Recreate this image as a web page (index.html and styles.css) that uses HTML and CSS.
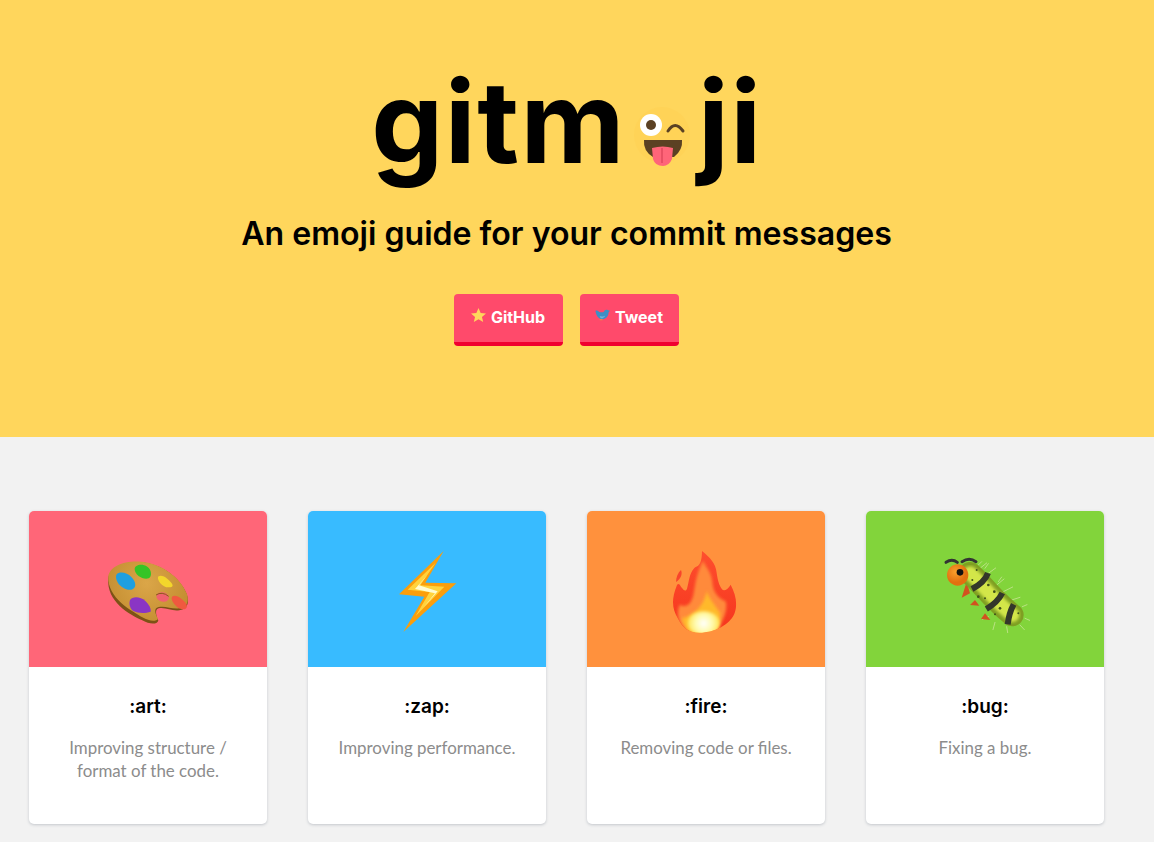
FILE: index.html
```html
<!DOCTYPE html>
<html>
  <head>
    <meta charset="UTF-8">
    <title>gitmoji</title>
    <link rel="stylesheet" href="styles.css">
  </head>
  <body>
    <header class="hero">
      <h1 class="logo">
        <span>gitm</span>
        <svg class="logo-face" viewBox="0 0 65 75">
          <circle cx="32" cy="35" r="28" fill="#ffd357"/>
          <circle cx="21" cy="25" r="11" fill="#fff"/>
          <circle cx="21" cy="25" r="5" fill="#5b4123"/>
          <path d="M38 31q7-11 15 0" fill="none" stroke="#5b4123" stroke-width="3" stroke-linecap="round"/>
          <path d="M14 40h38q1 10-8 17H23q-10-6-9-17z" fill="#5b4123"/>
          <path d="M22 48q11-3 21 0l-1 11q-3 7-9 7-8 0-10-7z" fill="#ff6579"/>
          <path d="M32 48v15" stroke="#e0485e" stroke-width="1.500"/>
        </svg>
        <span>ji</span>
      </h1>
      <h2 class="tagline">An emoji guide for your commit messages</h2>
      <div class="hero-buttons">
        <a class="btn btn-github" href="#">
          <svg class="btn-icon" viewBox="0 0 16 16"><path d="M8 0l2.300 5.200 5.700.6-4.300 3.700 1.300 5.500L8 12.100 3 15l1.300-5.500L0 5.800l5.700-.6z" fill="#ffd65c"/></svg>
          GitHub
        </a>
        <a class="btn btn-tweet" href="#">
          <svg class="btn-icon" viewBox="0 0 16 16">
            <path d="M.5 3c1.500-.7 3 .1 3.800 1.200 2 .6 4 .5 5.200-.2C10 2 12 1.200 14 2.300l2 .7-1.500 1.400C14.500 9 11 12 7.500 12 4 12 1 8 .5 3z" fill="#3c8fc5"/>
            <path d="M5 8.500c2 .8 4.500.6 6-.5-1 2-2.500 3-4 3-1 0-1.500-1-2-2.500z" fill="#6fb4dc"/>
            <path d="M5 12.500h3" stroke="#e79a3a"/>
          </svg>
          Tweet
        </a>
      </div>
    </header>

    <main class="cards">
      <article class="card">
        <div class="card-emoji card-art">
          <svg class="emoji-art" viewBox="0 0 330 300">
            <defs>
              <radialGradient id="wood" gradientUnits="userSpaceOnUse" cx="170" cy="130" r="150">
                <stop offset="0" stop-color="#dba648"/>
                <stop offset="1" stop-color="#c08a2e"/>
              </radialGradient>
            </defs>
            <path d="M55 115C58 85 105 62 155 67c60 6 115 45 135 95 8 22 6 44-22 49-22 4-40-10-62-6-14 4-6 25-1 37-5 12-25 12-50-2C120 225 48 185 55 115z" fill="#7d5216"/>
            <path d="M55 108C60 78 105 60 155 65c60 6 115 45 136 97 6 22 2 40-23 43-22 3-40-8-62-4-18 4-8 24-2 35-6 10-26 8-47-4C130 215 50 175 55 108z" fill="url(#wood)"/>
            <ellipse cx="218" cy="171" rx="19" ry="14" transform="rotate(12 218 171)" fill="#f0626e"/>
            <path d="M198 165q18-12 38 4" fill="none" stroke="#8a5a1a" stroke-width="3"/>
            <path d="M134 88c0-14 22-18 38-8 13 8 15 30 4 35-15 6-42-9-42-27z" fill="#36c426"/>
            <path d="M80 103c8-10 32-6 44 8 16 16 16 34 0 38-15 3-34-10-40-20-6-9-8-20-4-26z" fill="#1f9fe0"/>
            <path d="M204 110c12-8 26 4 37 15 11 11 8 17-4 17-18 2-36-21-33-32z" fill="#f3d62b"/>
            <path d="M246 170c10-8 26 2 38 15 13 14 6 26-10 22-15-3-34-27-28-37z" fill="#f0593f"/>
            <path d="M120 180c8-12 32-10 46 3 10 10 18 22 16 32-17 6-38 5-52-2-11-8-14-22-10-33z" fill="#8a35c4"/>
          </svg>
        </div>
        <div class="card-info">
          <h3 class="card-code">:art:</h3>
          <p class="card-desc">Improving structure / format of the code.</p>
        </div>
      </article>

      <article class="card">
        <div class="card-emoji card-zap">
          <svg class="emoji-zap" viewBox="0 0 255 300">
            <path d="M176 33L121 128l93 2L55 276l63-106-76-7z" fill="#fb9e0b"/>
            <path d="M152 68L106 136l72 4L92 228l42-72-66-7z" fill="#ffd33d"/>
            <path d="M128 104L90 147l60 13-34 42 42-48-56-18z" fill="#fffbd0"/>
          </svg>
        </div>
        <div class="card-info">
          <h3 class="card-code">:zap:</h3>
          <p class="card-desc">Improving performance.</p>
        </div>
      </article>

      <article class="card">
        <div class="card-emoji card-fire">
          <svg class="emoji-fire" viewBox="0 0 285 300">
            <defs>
              <radialGradient id="flameCore" gradientUnits="userSpaceOnUse" cx="140" cy="250" r="50">
                <stop offset="0" stop-color="#fff"/>
                <stop offset=".5" stop-color="#fffbb0"/>
                <stop offset="1" stop-color="#ffe04a"/>
              </radialGradient>
              <linearGradient id="flameEdge" x1="0" y1="0" x2="0" y2="1">
                <stop offset="0" stop-color="#ff5230"/>
                <stop offset="1" stop-color="#f5321c"/>
              </linearGradient>
              <filter id="soft" x="-20%" y="-20%" width="140%" height="140%">
                <feGaussianBlur stdDeviation="4"/>
              </filter>
              <clipPath id="flameClip">
                <path d="M135 33c14 12 36 28 42 55 4 18 4 40 18 60 6 6 16 2 26-14 14 28 22 55 12 85-10 28-48 55-98 59-40 2-58-14-73-44-14-24-22-50-2-99 4-6 8-3 13 7 8 10 13 14 17 4 6-20 6-45 22-62 12-8 22-6 23-51z"/>
              </clipPath>
            </defs>
            <path d="M72 90c5 12 0 26-15 36 0-14 6-28 15-36z" fill="#f8452c"/>
            <g clip-path="url(#flameClip)">
              <rect width="285" height="300" fill="url(#flameEdge)"/>
              <path d="M138 62c10 22 26 36 28 66 2 30 20 48 40 56 6 24-4 56-30 90H92c-26-18-36-50-24-80 14 8 28 4 36-14 12-24 4-56 34-118z" fill="#ff8a3a" filter="url(#soft)"/>
              <path d="M150 152c4 24 26 44 40 68 0 26-12 50-26 70H104c-14-20-26-38-30-56 14 0 26-10 38-18 16-12 30-30 38-64z" fill="#ffb92a" filter="url(#soft)"/>
              <ellipse cx="140" cy="250" rx="48" ry="36" fill="url(#flameCore)" filter="url(#soft)"/>
            </g>
          </svg>
        </div>
        <div class="card-info">
          <h3 class="card-code">:fire:</h3>
          <p class="card-desc">Removing code or files.</p>
        </div>
      </article>

      <article class="card">
        <div class="card-emoji card-bug">
          <svg class="emoji-bug" viewBox="0 0 300 270">
            <defs>
              <radialGradient id="head" cx=".4" cy=".35">
                <stop offset="0" stop-color="#f9a02d"/>
                <stop offset="1" stop-color="#e2700f"/>
              </radialGradient>
              <filter id="glow" x="-20%" y="-20%" width="140%" height="140%">
                <feGaussianBlur stdDeviation="5"/>
              </filter>
            </defs>
            <g stroke="#d6e7a8" stroke-width="2" stroke-linecap="round">
              <path d="M135 70l20-16M160 85l22-16M185 120l22-18M205 140l28-14M230 165l25-8M262 185l14-6M270 220l14 6M255 240l13 14M215 245l3 18M180 232l-6 22M160 215l-18 8M130 60l10-10M150 70l10-14M190 110l10-14"/>
            </g>
            <path d="M95 110l-15 48 25-13zM120 165l-15 15 28 2zM150 205l-12 17 28 3z" fill="#d2521f"/>
            <path d="M105 85C130 105 165 150 190 172 205 188 220 200 232 210" fill="none" stroke="#7f9f22" stroke-width="68" stroke-linecap="round"/>
            <path d="M105 85C130 105 165 150 190 172 205 188 220 200 232 210" fill="none" stroke="#d3e64a" stroke-width="42" stroke-linecap="round" filter="url(#glow)"/>
            <path d="M159 84q-10 28-48 48M202 144q-14 28-48 48M236 178q-14 26-18 60" fill="none" stroke="#33372a" stroke-width="18"/>
            <g fill="#3f521a">
              <circle cx="160" cy="120" r="4"/><circle cx="130" cy="155" r="4"/><circle cx="178" cy="140" r="4"/>
              <circle cx="195" cy="190" r="4"/><circle cx="150" cy="160" r="3"/><circle cx="125" cy="75" r="3"/>
              <circle cx="112" cy="105" r="3"/><circle cx="250" cy="205" r="3"/><circle cx="180" cy="208" r="3"/>
            </g>
            <circle cx="68" cy="90" r="32" fill="url(#head)"/>
            <circle cx="75" cy="82" r="10" fill="#111"/>
            <path d="M33 52q18-12 34 0M81 50q22-14 42 0" fill="none" stroke="#333" stroke-width="9" stroke-linecap="round"/>
          </svg>
        </div>
        <div class="card-info">
          <h3 class="card-code">:bug:</h3>
          <p class="card-desc">Fixing a bug.</p>
        </div>
      </article>
    </main>
  </body>
</html>
```

FILE: styles.css
```css
* {
  box-sizing: border-box;
}

body {
  font-family: 'Lato', 'Open Sans', sans-serif;
  background-color: #F2F2F2;
  margin: 0;
}

.hero {
  height: 437px;
  padding-top: 53px;
  background-color: #FFD65C;
  color: #000000;
  text-align: center;
}

.logo {
  display: flex;
  justify-content: center;
  align-items: flex-end;
  height: 143px;
  margin: 0;
  padding-right: 20px;
  font-family: 'Inter', sans-serif;
  font-size: 114px;
  font-weight: 700;
  line-height: 149px;
  letter-spacing: 1.5px;
}

.logo-face {
  width: 65px;
  height: 75px;
  margin: 0 3px 21px 4px;
}

.tagline {
  margin: 18px 0 0;
  padding-right: 21px;
  font-family: 'Inter', sans-serif;
  font-size: 32.100px;
  font-weight: 600;
  line-height: 40px;
}

.hero-buttons {
  display: flex;
  justify-content: center;
  gap: 17px;
  margin-top: 40px;
  padding-right: 22px;
}

.btn {
  display: flex;
  align-items: center;
  justify-content: center;
  gap: 5px;
  height: 52px;
  padding-bottom: 2px;
  border-bottom: 4px solid #F0002F;
  border-radius: 4px;
  background-color: #FF4A6B;
  color: #FFFFFF;
  font-family: 'Inter', sans-serif;
  font-size: 16px;
  font-weight: 700;
  text-decoration: none;
}

.btn-github {
  width: 109px;
}

.btn-tweet {
  width: 99px;
}

.btn-icon {
  width: 15px;
  height: 15px;
  margin-top: -4px;
}

.cards {
  display: grid;
  grid-template-columns: repeat(4, 238px);
  gap: 41px;
  padding: 74px 29px 18px;
}

.card {
  overflow: hidden;
  height: 313px;
  border-radius: 5px;
  background-color: #FFFFFF;
  box-shadow: 0 1px 3px rgba(60, 70, 90, 0.25);
}

.card-emoji {
  display: flex;
  align-items: center;
  justify-content: center;
  height: 156px;
  padding-top: 2px;
}

.card-art {
  background-color: #FF6678;
}

.card-zap {
  background-color: #38BBFF;
}

.card-fire {
  background-color: #FF913D;
}

.card-bug {
  background-color: #82D43B;
}

.emoji-art {
  width: 110px;
  height: 100px;
  margin-right: 6px;
}

.emoji-zap {
  width: 85px;
  height: 100px;
}

.emoji-fire {
  width: 95px;
  height: 100px;
  margin-right: 3px;
}

.emoji-bug {
  width: 100px;
  height: 90px;
}

.card-info {
  padding: 27px 24px 0;
  text-align: center;
}

.card-code {
  margin: 0;
  color: #000000;
  font-family: 'Inter', sans-serif;
  font-size: 19px;
  font-weight: 600;
  line-height: 26px;
}

.card-desc {
  margin: 16px 0 0;
  color: #8C8C8C;
  font-size: 16.900px;
  line-height: 23px;
}
```
